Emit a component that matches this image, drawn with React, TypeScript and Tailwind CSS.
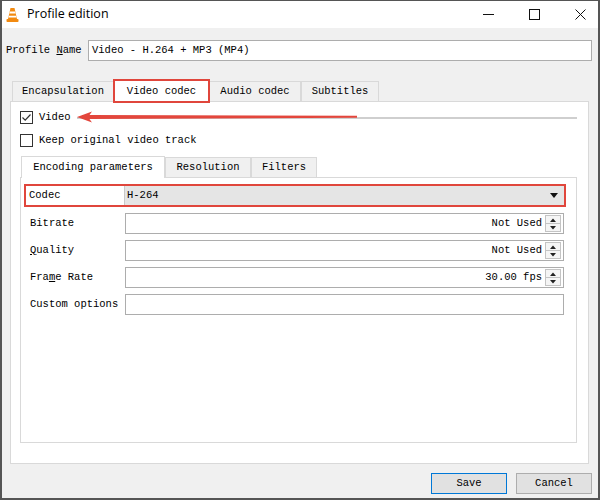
import React from "react";

const mono = "font-['Liberation_Mono',monospace] text-[10.5px] text-black";

function VlcIcon() {
  return (
    <svg width="13" height="16" viewBox="0 0 13 16">
      <path d="M4.5 1 L8.5 1 L11 12 L2 12 Z" fill="#f28a10" />
      <path d="M3.9 4.5 L9.1 4.5 L9.6 6.6 L3.4 6.6 Z" fill="#fff" />
      <path d="M2.9 8.8 L10.1 8.8 L10.5 10.6 L2.5 10.6 Z" fill="#fff" />
      <rect x="0.5" y="12" width="12" height="3" rx="0.8" fill="#f28a10" />
    </svg>
  );
}

function Checkbox({ checked }: { checked?: boolean }) {
  return (
    <div className="w-[13px] h-[13px] border border-[#333] bg-white flex items-center justify-center">
      {checked && (
        <svg width="11" height="11" viewBox="0 0 11 11">
          <path d="M1.5 5.5 L4.2 8.2 L9.5 2.5" fill="none" stroke="#333" strokeWidth="1.2" />
        </svg>
      )}
    </div>
  );
}

function Spinner() {
  return (
    <div className="w-[16px] h-[17px] border border-[#c4c4c4] bg-[#f5f5f5] flex flex-col">
      <div className="flex-1 flex items-center justify-center border-b border-[#c4c4c4]">
        <svg width="6" height="4" viewBox="0 0 6 4"><path d="M0 4 L3 0.5 L6 4 Z" fill="#222" /></svg>
      </div>
      <div className="flex-1 flex items-center justify-center">
        <svg width="6" height="4" viewBox="0 0 6 4"><path d="M0 0 L3 3.5 L6 0 Z" fill="#222" /></svg>
      </div>
    </div>
  );
}

function SpinRow({ label, value }: { label: React.ReactNode; value: string }) {
  return (
    <div className="flex items-center h-[21px] pl-[9px] pr-[12px]">
      <div className={`w-[95px] ${mono}`}>{label}</div>
      <div className="flex-1 h-[21px] border border-[#adadad] bg-white flex items-center justify-end pr-[2px] gap-[3px]">
        <span className={mono}>{value}</span>
        <Spinner />
      </div>
    </div>
  );
}

function Tab({ label, active, w, red }: { label: string; active?: boolean; w: string; red?: boolean }) {
  return (
    <div
      className={`${w} h-[20px] flex items-center justify-center border border-b-0 ${mono} ${
        active ? "bg-white border-[#d9d9d9] h-[22px] -mb-px relative z-10" : "bg-[#f0f0f0] border-[#d9d9d9]"
      } ${red ? "outline-2 outline-[#e0463c] -outline-offset-1" : ""}`}
    >
      {label}
    </div>
  );
}

export default function App() {
  return (
    <div className="w-[600px] h-[500px] flex flex-col bg-[#f0f0f0] border-x-2 border-b-2 border-t border-[#555]">
      {/* Title bar */}
      <div className="h-[27px] bg-white flex items-center pl-[4px] pr-[12px]">
        <VlcIcon />
        <span className="ml-[8px] font-['Open_Sans',sans-serif] text-[12.5px] text-black">Profile edition</span>
        <div className="ml-auto flex items-center gap-[35px]">
          <svg width="11" height="11" viewBox="0 0 11 11"><path d="M0 5.5 H11" stroke="#111" strokeWidth="1" /></svg>
          <svg width="11" height="11" viewBox="0 0 11 11"><rect x="0.5" y="0.5" width="10" height="10" fill="none" stroke="#111" /></svg>
          <svg width="11" height="11" viewBox="0 0 11 11"><path d="M0.5 0.5 L10.5 10.5 M10.5 0.5 L0.5 10.5" stroke="#111" strokeWidth="1" /></svg>
        </div>
      </div>

      {/* Profile name */}
      <div className="mt-[12px] flex items-center pl-[4px] pr-[6px]">
        <div className={`w-[82px] ${mono}`}>
          Profile <span className="underline">N</span>ame
        </div>
        <div className={`flex-1 h-[21px] border border-[#adadad] bg-white flex items-center pl-[3px] ${mono}`}>
          Video - H.264 + MP3 (MP4)
        </div>
      </div>

      {/* Main tabs */}
      <div className="mt-[19px] pl-[8px] pr-[9px] flex flex-col">
        <div className="flex items-end pl-[2px] h-[21px]">
          <Tab label="Encapsulation" w="w-[102px]" />
          <Tab label="Video codec" w="w-[95px]" active red />
          <Tab label="Audio codec" w="w-[92px]" />
          <Tab label="Subtitles" w="w-[78px]" />
        </div>
        <div className="relative h-[363px] bg-white border border-[#d9d9d9] pt-[9px] pl-[9px] pr-[11px] flex flex-col">
          {/* Video row */}
          <div className="flex items-center h-[13px]">
            <Checkbox checked />
            <span className={`ml-[6px] ${mono}`}>Video</span>
            <div className="flex-1 ml-[6px] h-[2px] bg-[#cfcfcf]" />
          </div>
          {/* annotation arrow */}
          <svg className="absolute left-[66px] top-[8px]" width="280" height="14" viewBox="0 0 280 14">
            <path d="M0 7 L15 1.5 L12.5 5 L280 5.8 L280 7.8 L12.5 9 L15 12.5 Z" fill="#e3463c" />
          </svg>
          <div className="flex items-center h-[13px] mt-[10px]">
            <Checkbox />
            <span className={`ml-[6px] ${mono}`}>Keep original video track</span>
          </div>

          {/* Inner tabs */}
          <div className="mt-[9px] flex items-end pl-[1px] h-[21px]">
            <Tab label="Encoding parameters" w="w-[144px]" active />
            <Tab label="Resolution" w="w-[86px]" />
            <Tab label="Filters" w="w-[66px]" />
          </div>
          <div className="h-[266px] border border-[#d9d9d9] bg-white pt-[6px] flex flex-col gap-[6px]">
            {/* Codec */}
            <div className="ml-[3px] mr-[10px] h-[23px] border-2 border-[#e0463c] flex items-stretch">
              <div className={`w-[98px] pl-[3px] flex items-center ${mono}`}>Codec</div>
              <div className={`flex-1 bg-[#e5e5e5] border-l border-[#c9c9c9] flex items-center pl-[2px] pr-[6px] ${mono}`}>
                <span>H-264</span>
                <svg className="ml-auto" width="8" height="5" viewBox="0 0 8 5"><path d="M0 0 L8 0 L4 5 Z" fill="#111" /></svg>
              </div>
            </div>
            <SpinRow label="Bitrate" value="Not Used" />
            <SpinRow label={<><span className="underline">Q</span>uality</>} value="Not Used" />
            <SpinRow label={<>Fra<span className="underline">m</span>e Rate</>} value="30.00 fps" />
            <div className="flex items-center h-[21px] pl-[9px] pr-[12px]">
              <div className={`w-[95px] ${mono}`}>Custom options</div>
              <div className="flex-1 h-[21px] border border-[#adadad] bg-white" />
            </div>
          </div>
        </div>
      </div>

      {/* Buttons */}
      <div className="mt-[9px] flex justify-end gap-[9px] pr-[6px]">
        <button className={`w-[76px] h-[21px] border border-[#0078d7] bg-[#e1e1e1] ${mono}`}>Save</button>
        <button className={`w-[76px] h-[21px] border border-[#adadad] bg-[#e1e1e1] ${mono}`}>Cancel</button>
      </div>
    </div>
  );
}
